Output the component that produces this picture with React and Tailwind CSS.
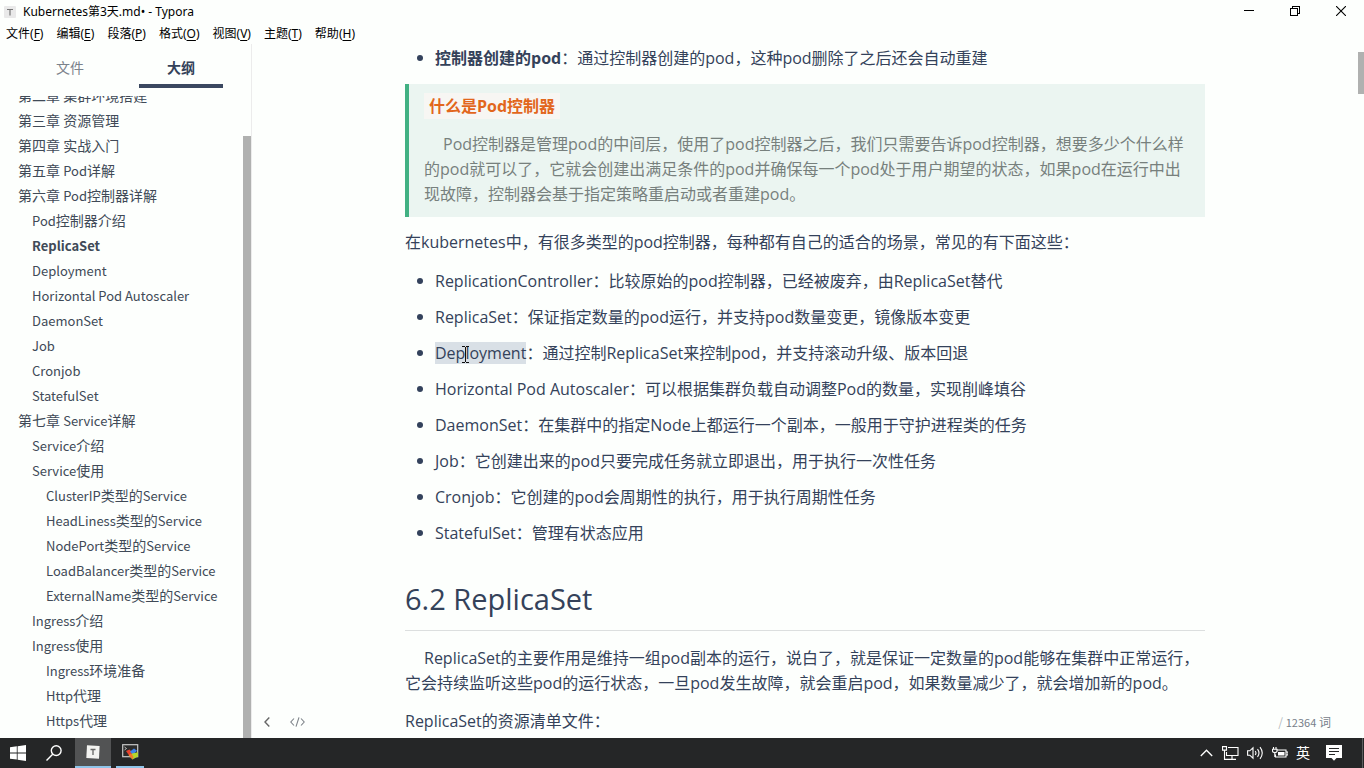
const menus = [
  ["文件", "F"],
  ["编辑", "E"],
  ["段落", "P"],
  ["格式", "O"],
  ["视图", "V"],
  ["主题", "T"],
  ["帮助", "H"],
];

const outline = [
  [0, "第二章 集群环境搭建"],
  [0, "第三章 资源管理"],
  [0, "第四章 实战入门"],
  [0, "第五章 Pod详解"],
  [0, "第六章 Pod控制器详解"],
  [1, "Pod控制器介绍"],
  [1, "ReplicaSet", true],
  [1, "Deployment"],
  [1, "Horizontal Pod Autoscaler"],
  [1, "DaemonSet"],
  [1, "Job"],
  [1, "Cronjob"],
  [1, "StatefulSet"],
  [0, "第七章 Service详解"],
  [1, "Service介绍"],
  [1, "Service使用"],
  [2, "ClusterIP类型的Service"],
  [2, "HeadLiness类型的Service"],
  [2, "NodePort类型的Service"],
  [2, "LoadBalancer类型的Service"],
  [2, "ExternalName类型的Service"],
  [1, "Ingress介绍"],
  [1, "Ingress使用"],
  [2, "Ingress环境准备"],
  [2, "Http代理"],
  [2, "Https代理"],
];

const indents = ["pl-[18px]", "pl-8", "pl-[46px]"];

const controllers = [
  ["ReplicationController", "比较原始的pod控制器，已经被废弃，由ReplicaSet替代"],
  ["ReplicaSet", "保证指定数量的pod运行，并支持pod数量变更，镜像版本变更"],
  ["Deployment", "通过控制ReplicaSet来控制pod，并支持滚动升级、版本回退"],
  ["Horizontal Pod Autoscaler", "可以根据集群负载自动调整Pod的数量，实现削峰填谷"],
  ["DaemonSet", "在集群中的指定Node上都运行一个副本，一般用于守护进程类的任务"],
  ["Job", "它创建出来的pod只要完成任务就立即退出，用于执行一次性任务"],
  ["Cronjob", "它创建的pod会周期性的执行，用于执行周期性任务"],
  ["StatefulSet", "管理有状态应用"],
];

// Latin runs are set one size smaller than the Chinese text around them.
function MixedText({ text }) {
  return text
    .split(/([A-Za-z][A-Za-z ]*)/)
    .filter(Boolean)
    .map((run, i) =>
      /^[A-Za-z]/.test(run) ? (
        <span key={i} className="text-[13px]">
          {run}
        </span>
      ) : (
        run
      )
    );
}

function TitleBar() {
  return (
    <header className="flex h-6 shrink-0 items-center pl-1 font-['Noto_Sans','Noto_Sans_CJK_SC',sans-serif] text-black">
      <svg className="h-3 w-3" viewBox="0 0 12 12" aria-hidden="true">
        <rect width="12" height="12" rx="1" fill="#e9e9e9" />
        <path d="M3 3.5h6M6 3.5v6" stroke="#777" strokeWidth="1.2" />
      </svg>
      <h1 className="ml-[7px] text-xs">Kubernetes第3天.md• - Typora</h1>
      <div className="ml-auto flex self-start">
        <button aria-label="最小化" className="flex h-[22px] w-[46px] items-center justify-center">
          <svg width="10" height="10" viewBox="0 0 10 10" fill="none" stroke="#000" shapeRendering="crispEdges">
            <path d="M0 4.5h10" />
          </svg>
        </button>
        <button aria-label="还原" className="flex h-[22px] w-[46px] items-center justify-center">
          <svg width="10" height="10" viewBox="0 0 10 10" fill="none" stroke="#000" shapeRendering="crispEdges">
            <path d="M.5 2.5h7v7h-7zM2.5 2.5v-2h7v7h-2" />
          </svg>
        </button>
        <button aria-label="关闭" className="flex h-[22px] w-[46px] items-center justify-center">
          <svg width="10" height="10" viewBox="0 0 10 10" fill="none" stroke="#000" strokeWidth="1.1">
            <path d="M0 0l10 10M10 0L0 10" />
          </svg>
        </button>
      </div>
    </header>
  );
}

function MenuBar() {
  return (
    <nav className="flex h-5 shrink-0 items-center gap-[13px] pl-[6px] font-['Noto_Sans','Noto_Sans_CJK_SC',sans-serif] text-xs text-black">
      {menus.map(([label, key]) => (
        <button key={key} className="whitespace-nowrap">
          {label}(<span className="underline underline-offset-2">{key}</span>)
        </button>
      ))}
    </nav>
  );
}

function Sidebar() {
  return (
    <aside className="flex w-[252px] shrink-0 flex-col border-r border-[#ececec] font-['Noto_Sans_CJK_SC',sans-serif] text-[#404a57]">
      <div className="flex h-11 shrink-0 pl-7 text-sm">
        <button className="w-[84px] pt-[2px] text-[#7b828b]">文件</button>
        <button className="ml-[27px] w-[84px] border-b-4 border-[#3b4860] pt-[6px] font-bold text-[#34425a]">大纲</button>
      </div>
      <div className="mt-2 flex min-h-0 flex-1">
        <ul className="flex min-w-0 flex-1 flex-col justify-end overflow-hidden pb-[5px] text-sm leading-[25px]">
          {outline.map(([level, label, active]) => (
            <li key={label} className={`h-[25px] shrink-0 whitespace-nowrap ${indents[level]} ${active ? "font-bold" : ""}`}>
              <a href="#outline">
                <MixedText text={label} />
              </a>
            </li>
          ))}
        </ul>
        <div className="mt-10 w-2 shrink-0 bg-[#b0b1b0]" />
      </div>
    </aside>
  );
}

function Caret() {
  return (
    <svg className="absolute top-1 left-[27px] h-[17px] w-[7px]" viewBox="0 0 7 17" fill="none" stroke="#111" shapeRendering="crispEdges" aria-hidden="true">
      <path d="M0 .5h3M4 .5h3M3.5 1v15M0 16.5h3M4 16.5h3" />
    </svg>
  );
}

function Bullet({ children }) {
  return (
    <li className="flex items-center">
      <span className="mr-3 ml-3 h-[6px] w-[6px] shrink-0 rounded-full bg-[#34425c]" />
      <span>{children}</span>
    </li>
  );
}

function Article() {
  return (
    <article className="mx-auto w-full max-w-[800px] shrink-0 text-base leading-[25px] text-[#34425a]">
      <ul className="leading-7">
        <Bullet>
          <strong>控制器创建的pod</strong>：通过控制器创建的pod，这种pod删除了之后还会自动重建
        </Bullet>
      </ul>
      <blockquote className="mt-3 border-l-4 border-[#42b183] bg-[#ebf5f1] px-[15px] py-[10px] text-[#77807d]">
        <p>
          <strong className="bg-[#f7f6f3] px-[5px] py-[2px] text-[#e2661c]">什么是Pod控制器</strong>
        </p>
        <p className="mt-[13px] indent-[19px]">
          Pod控制器是管理pod的中间层，使用了pod控制器之后，我们只需要告诉pod控制器，想要多少个什么样的pod就可以了，它就会创建出满足条件的pod并确保每一个pod处于用户期望的状态，如果pod在运行中出现故障，控制器会基于指定策略重启动或者重建pod。
        </p>
      </blockquote>
      <p className="mt-[13px]">在kubernetes中，有很多类型的pod控制器，每种都有自己的适合的场景，常见的有下面这些：</p>
      <ul className="mt-2 leading-9">
        {controllers.map(([name, text]) => (
          <Bullet key={name}>
            {name === "Deployment" ? (
              <span className="relative bg-[#d9e0e6]">
                {name}
                <Caret />
              </span>
            ) : (
              name
            )}
            ：{text}
          </Bullet>
        ))}
      </ul>
      <h2 className="mt-[26px] border-b border-[#dcdfdf] pb-[9px] text-[29px] leading-[44px] font-medium">6.2 ReplicaSet</h2>
      <p className="mt-[15px] indent-[19px]">
        ReplicaSet的主要作用是维持一组pod副本的运行，说白了，就是保证一定数量的pod能够在集群中正常运行，它会持续监听这些pod的运行状态，一旦pod发生故障，就会重启pod，如果数量减少了，就会增加新的pod。
      </p>
      <p className="mt-[13px]">ReplicaSet的资源清单文件：</p>
    </article>
  );
}

function Taskbar() {
  return (
    <footer className="flex h-[30px] shrink-0 items-center bg-[#252627] text-white">
      <button aria-label="开始" className="flex w-9 justify-center">
        <svg width="16" height="16" viewBox="0 0 16 16" fill="#fff">
          <path d="M0 2.3l6.8-1v6.2H0zM7.6 1.2L16 0v7.5H7.6zM0 8.4h6.8v6.2L0 13.7zM7.6 8.4H16V16l-8.4-1.2z" />
        </svg>
      </button>
      <button aria-label="搜索" className="mr-[3px] flex w-9 justify-center">
        <svg width="16" height="16" viewBox="0 0 16 16" fill="none" stroke="#fff" strokeWidth="1.4">
          <circle cx="10.2" cy="5.6" r="4.9" />
          <path d="M6.7 9.2L.5 15.5" />
        </svg>
      </button>
      <button aria-label="Typora" className="flex h-full w-9 items-center justify-center border-b-2 border-[#8fc5ea] bg-[#525354]">
        <svg width="14" height="14" viewBox="0 0 14 14">
          <path d="M1 .2L13.6 1 13 13.8 .3 13z" fill="#f3f3f1" />
          <path d="M4.5 4.5h5M7 4.5V10" stroke="#666" strokeWidth="1.3" />
        </svg>
      </button>
      <button aria-label="MobaXterm" className="ml-[5px] flex h-full w-7 items-center justify-center border-b-2 border-[#8fc5ea]">
        <svg width="17" height="16" viewBox="0 0 17 16">
          <rect x=".7" y=".7" width="15" height="12" fill="#2c2c2c" stroke="#c9c9c9" strokeWidth="1.2" />
          <path d="M2.5 3l2 1.5-2 1.5" stroke="#ddd" fill="none" strokeWidth=".8" />
          <path d="M4 7l3.5-1.5 3 3L7.5 12z" fill="#e8432e" />
          <path d="M8 7.5L12 4.5l3 2.2-4.3 4.3z" fill="#3f83ea" />
          <path d="M7 11.5l3-2 6-1.2v4.2L10.5 15.5z" fill="#b5d52c" />
          <path d="M6.5 11l3-1.5 2 3.5-1 2.5z" fill="#f07a2c" />
        </svg>
      </button>
      <div className="ml-auto flex h-full items-center">
        <button aria-label="显示隐藏的图标" className="mr-[9px]">
          <svg width="13" height="8" viewBox="0 0 13 8" fill="none" stroke="#fff" strokeWidth="1.3">
            <path d="M.8 7L6.5 1.2 12.2 7" />
          </svg>
        </button>
        <button aria-label="网络" className="mr-2">
          <svg width="17" height="14" viewBox="0 0 17 14" fill="none" stroke="#fff" strokeWidth="1.1">
            <path d="M6 1.5h10v8H4.5V6M10 9.5V13M6 13.4h8M.5 .6h4v3.5h-4zM2.5 4v9.4H6" />
          </svg>
        </button>
        <button aria-label="音量" className="mr-2">
          <svg width="17" height="14" viewBox="0 0 17 14" fill="none" stroke="#fff" strokeWidth="1.1">
            <path d="M.6 4.8h2.2L6 1.8v10.4L2.8 9.2H.6zM8.2 5q1.5 2 0 4M10.5 3.2q3 3.8 0 7.6M13 1.2q4.5 5.8 0 11.6" />
          </svg>
        </button>
        <button aria-label="电池" className="mr-2">
          <svg width="16" height="12" viewBox="0 0 16 12" fill="none" stroke="#fff" strokeWidth="1.1">
            <path d="M5.5 3H14v7H3.5V7.5M14.5 5H16v3h-1.5M1.5 0v2M4 0v2M.5 2.3h4.5V4q0 1.5-2.2 1.5T.5 4zM2.8 5.5V10" />
            <path d="M6 5h6.5v3.5H6z" fill="#fff" stroke="none" />
          </svg>
        </button>
        <button aria-label="输入法" className="mr-4 text-sm leading-5">英</button>
        <button aria-label="通知" className="mr-5">
          <svg width="16" height="16" viewBox="0 0 16 16">
            <path d="M0 0h16v13h-5.5L8 15.8 5.5 13H0z" fill="#fff" />
            <path d="M3 3.5h10M3 6.5h10M3 9.5h6" stroke="#252627" strokeWidth="1.1" />
          </svg>
        </button>
        <div className="h-full w-[2px] border-l border-[#5c5d5e]" />
      </div>
    </footer>
  );
}

export default function App() {
  return (
    <div className="flex h-screen flex-col overflow-hidden bg-[#fdfffd] font-['Open_Sans','Noto_Sans_CJK_SC',sans-serif]">
      <TitleBar />
      <MenuBar />
      <div className="flex min-h-0 flex-1">
        <Sidebar />
        <main className="relative flex min-w-0 flex-1">
          <div className="flex min-w-0 flex-1 flex-col overflow-hidden">
            <Article />
          </div>
          <div className="mt-2 h-[42px] w-[6px] shrink-0 bg-[#b0b1b0]" />
          <div className="absolute inset-x-0 bottom-0 flex h-8 items-center pr-[33px] pl-3 text-[#77808a]">
            <button aria-label="隐藏侧边栏">
              <svg width="6" height="10" viewBox="0 0 6 10" fill="none" stroke="#666" strokeWidth="1.4">
                <path d="M5.3 .6L1 5l4.3 4.4" />
              </svg>
            </button>
            <button aria-label="源代码模式" className="ml-5">
              <svg width="15" height="10" viewBox="0 0 15 10" fill="none" stroke="#7d8288" strokeWidth="1.1">
                <path d="M4 1.5L.8 5 4 8.5M11 1.5L14.2 5 11 8.5M9 .3L6 9.7" />
              </svg>
            </button>
            <button className="ml-auto font-['Noto_Sans_CJK_SC',sans-serif] text-xs">
              <span className="text-[#b5babf]">/</span> <span className="text-[11px]">12364</span> 词
            </button>
          </div>
        </main>
      </div>
      <Taskbar />
    </div>
  );
}
